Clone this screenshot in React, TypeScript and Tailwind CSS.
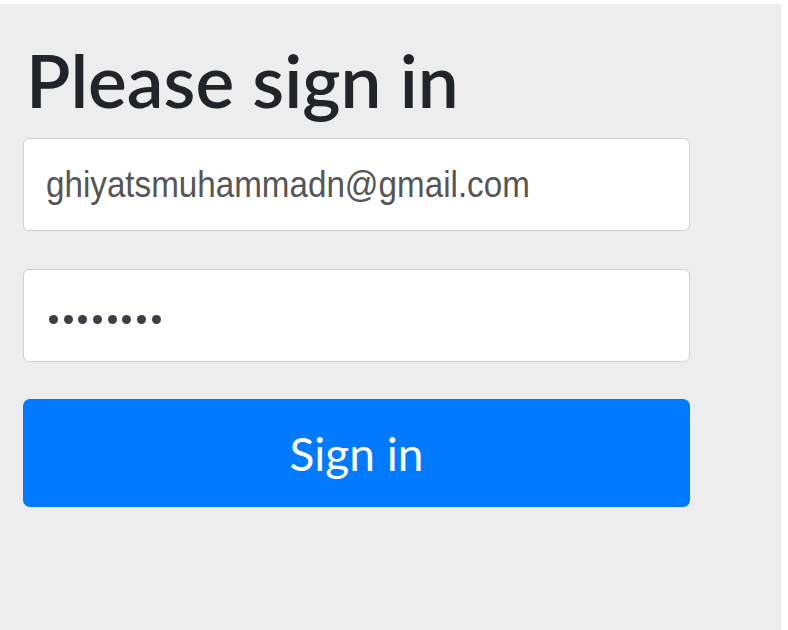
export default function App() {
  return (
    <div className="w-[788px] h-[630px] bg-white pt-[4px]">
      <div className="w-[781px] h-[626px] bg-[#ededed] pl-[23px] pt-[36px]">
        <h1 className="text-[73px] leading-[80px] font-semibold text-[#212529] pl-[3px] m-0" style={{ fontFamily: 'Lato, "Noto Sans", sans-serif' }}>Please sign in</h1>
        <div className="mt-[18px] w-[667px] h-[93px] bg-white border border-[#cfcfcf] rounded-[6px] flex items-center pl-[22px]">
          <span className="text-[36px] text-[#555] origin-left scale-x-[0.922] whitespace-nowrap" style={{ fontFamily: '"Liberation Sans", Arial, sans-serif' }}>ghiyatsmuhammadn@gmail.com</span>
        </div>
        <div className="mt-[38px] w-[667px] h-[93px] bg-white border border-[#cfcfcf] rounded-[6px] flex items-center pl-[25px] pt-[8px]">
          <div className="flex gap-[5.7px]">
            {Array.from({ length: 8 }).map((_, i) => (
              <span key={i} className="w-[9px] h-[9px] rounded-full bg-[#3b4048]" />
            ))}
          </div>
        </div>
        <button className="mt-[37px] w-[667px] h-[108px] bg-[#007bff] rounded-[7px] text-white text-[46px] flex items-center justify-center" style={{ fontFamily: 'Lato, "Noto Sans", sans-serif' }}>
          Sign in
        </button>
      </div>
    </div>
  );
}
